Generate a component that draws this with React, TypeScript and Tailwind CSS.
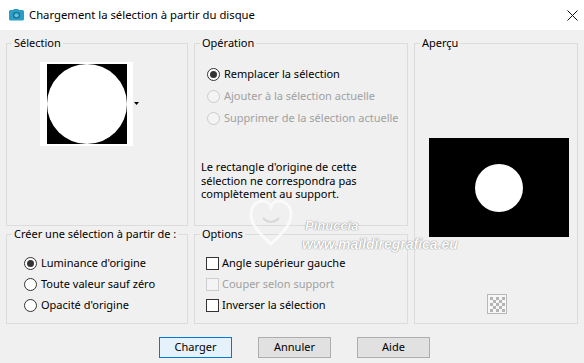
import React from "react";

const FONT = { fontFamily: '"Segoe UI", "Noto Sans", "Open Sans", sans-serif' };

function Radio({ checked, disabled, label, h }: { checked?: boolean; disabled?: boolean; label: string; h: string }) {
  return (
    <div className={`flex items-center ${h}`}>
      <span
        className={`w-[13px] h-[13px] rounded-full border flex items-center justify-center shrink-0 ${
          disabled ? "border-[#cccccc] bg-[#f4f4f4]" : "border-[#333333] bg-white"
        }`}
      >
        {checked && <span className="w-[7px] h-[7px] rounded-full bg-[#333333]" />}
      </span>
      <span className={`ml-[4px] whitespace-nowrap ${disabled ? "text-[#a0a0a0]" : "text-black"}`}>{label}</span>
    </div>
  );
}

function Check({ disabled, label }: { disabled?: boolean; label: string }) {
  return (
    <div className="flex items-center h-[21px]">
      <span
        className={`w-[13px] h-[13px] border shrink-0 ${
          disabled ? "border-[#cccccc] bg-[#f4f4f4]" : "border-[#333333] bg-white"
        }`}
      />
      <span className={`ml-[3px] whitespace-nowrap ${disabled ? "text-[#a0a0a0]" : "text-black"}`}>{label}</span>
    </div>
  );
}

function Group({ title, className, children }: { title: string; className?: string; children?: React.ReactNode }) {
  return (
    <fieldset className={`border border-[#dcdcdc] min-w-0 ${className ?? ""}`}>
      <legend className="ml-[5px] px-[2px] leading-[16px] text-black whitespace-nowrap">{title}</legend>
      {children}
    </fieldset>
  );
}

function Btn({ label, def }: { label: string; def?: boolean }) {
  return (
    <div
      className={`w-[73px] h-[21px] flex items-center justify-center border ${
        def ? "border-[#0078d7] bg-[#e5f1fb]" : "border-[#adadad] bg-[#e1e1e1]"
      }`}
    >
      {label}
    </div>
  );
}

export default function App() {
  return (
    <div className="relative w-[584px] h-[363px] bg-[#f0f0f0] text-[11px] text-black overflow-hidden" style={FONT}>
      {/* Title bar */}
      <div className="h-[30px] bg-white flex items-center">
        <svg width="17" height="12" viewBox="0 0 17 12" className="ml-[8px]">
          <path d="M1 2.5 Q1 1 2.5 1 H5 L6 0 H10 L11 1 H14.5 Q16 1 16 2.5 V10 Q16 11.5 14.5 11.5 H2.5 Q1 11.5 1 10 Z" fill="#2b9ec6" />
          <ellipse cx="8.5" cy="6.3" rx="3.6" ry="3.3" fill="#1b6f8f" />
          <ellipse cx="8.5" cy="6.3" rx="2.2" ry="2" fill="#5fc3e3" />
        </svg>
        <span className="ml-[4px] text-[11.3px]">Chargement la sélection à partir du disque</span>
        <svg width="11" height="11" viewBox="0 0 11 11" className="ml-auto mr-[6px]">
          <path d="M0.5 0.5 L10.5 10.5 M10.5 0.5 L0.5 10.5" stroke="#111" strokeWidth="1" />
        </svg>
      </div>

      {/* Body */}
      <div className="px-[6px] pt-[5px]">
        <div className="grid grid-cols-[182px_214px_164px] grid-rows-[191px_98px] gap-x-[6px]">
          <Group title="Sélection">
            <div className="flex items-center ml-[33px] mt-[11px]">
              <div className="w-[93px] h-[84px] bg-white flex items-center pl-[7px]">
                <div className="w-[80px] h-[80px] bg-black flex items-center justify-center">
                  <div className="w-[80px] h-[80px] rounded-full bg-white" />
                </div>
              </div>
              <svg width="6" height="4" viewBox="0 0 6 4" className="ml-[1px]">
                <path d="M0 0 H5 L2.5 3 Z" fill="#000" />
              </svg>
            </div>
          </Group>

          <Group title="Opération">
            <div className="pl-[12px] pt-[12px]">
              <Radio h="h-[22px]" checked label="Remplacer la sélection" />
              <Radio h="h-[22px]" disabled label="Ajouter à la sélection actuelle" />
              <Radio h="h-[22px]" disabled label="Supprimer de la sélection actuelle" />
            </div>
            <p className="pl-[6px] mt-[31px] leading-[13.5px]">
              Le rectangle d'origine de cette
              <br />
              sélection ne correspondra pas
              <br />
              complètement au support.
            </p>
          </Group>

          <Group title="Aperçu" className="row-span-2">
            <div className="flex flex-col">
              <div className="mt-[87px] ml-[14px] w-[140px] h-[99px] bg-black flex items-center justify-center">
                <div className="w-[48px] h-[48px] rounded-full bg-white" />
              </div>
              <svg width="20" height="20" viewBox="0 0 20 20" className="mt-[57px] ml-[72px]">
                <rect x="0.5" y="0.5" width="19" height="19" fill="#f6f6f6" stroke="#b8b8b8" />
                {[0, 1, 2, 3, 4].map((r) =>
                  [0, 1, 2, 3, 4].map((c) =>
                    (r + c) % 2 === 0 ? (
                      <rect key={`${r}-${c}`} x={3 + c * 3} y={3 + r * 3} width="3" height="3" fill="#b4b4b4" />
                    ) : null
                  )
                )}
              </svg>
            </div>
          </Group>

          <Group title="Créer une sélection à partir de :">
            <div className="pl-[17px] pt-[11px]">
              <Radio h="h-[21px]" checked label="Luminance d'origine" />
              <Radio h="h-[21px]" label="Toute valeur sauf zéro" />
              <Radio h="h-[21px]" label="Opacité d'origine" />
            </div>
          </Group>

          <Group title="Options">
            <div className="pl-[11px] pt-[11px]">
              <Check label="Angle supérieur gauche" />
              <Check disabled label="Couper selon support" />
              <Check label="Inverser la sélection" />
            </div>
          </Group>
        </div>

        <div className="flex gap-[26px] pl-[153px] mt-[13px]">
          <Btn def label="Charger" />
          <Btn label="Annuler" />
          <Btn label="Aide" />
        </div>
      </div>

      {/* Watermark overlay */}
      <div className="absolute left-[248px] top-[196px] pointer-events-none opacity-70">
        <svg width="46" height="52" viewBox="0 0 46 52">
          <path
            d="M23 48 C10 36 3 28 3 18 C3 10 9 5 15 5 C19 5 22 8 23 11 C24 8 27 5 31 5 C37 5 43 10 43 18 C43 28 36 36 23 48 Z"
            fill="none"
            stroke="#ffffff"
            strokeWidth="3"
          />
          <path d="M15 22 Q23 30 31 22" fill="none" stroke="#cfcfcf" strokeWidth="2" />
        </svg>
      </div>
      <div
        className="absolute left-[305px] top-[216px] pointer-events-none text-white italic font-bold text-[13px] opacity-80 [text-shadow:0_0_1px_#777,0_0_1px_#777]"
        style={{ fontFamily: '"Liberation Sans", sans-serif' }}
      >
        Pinuccia
      </div>
      <div
        className="absolute left-[302px] top-[234px] pointer-events-none text-white italic font-bold text-[14px] opacity-80 [text-shadow:0_0_1px_#777,0_0_1px_#777]"
        style={{ fontFamily: '"Liberation Sans", sans-serif' }}
      >
        www.maildiregrafica.eu
      </div>
    </div>
  );
}
